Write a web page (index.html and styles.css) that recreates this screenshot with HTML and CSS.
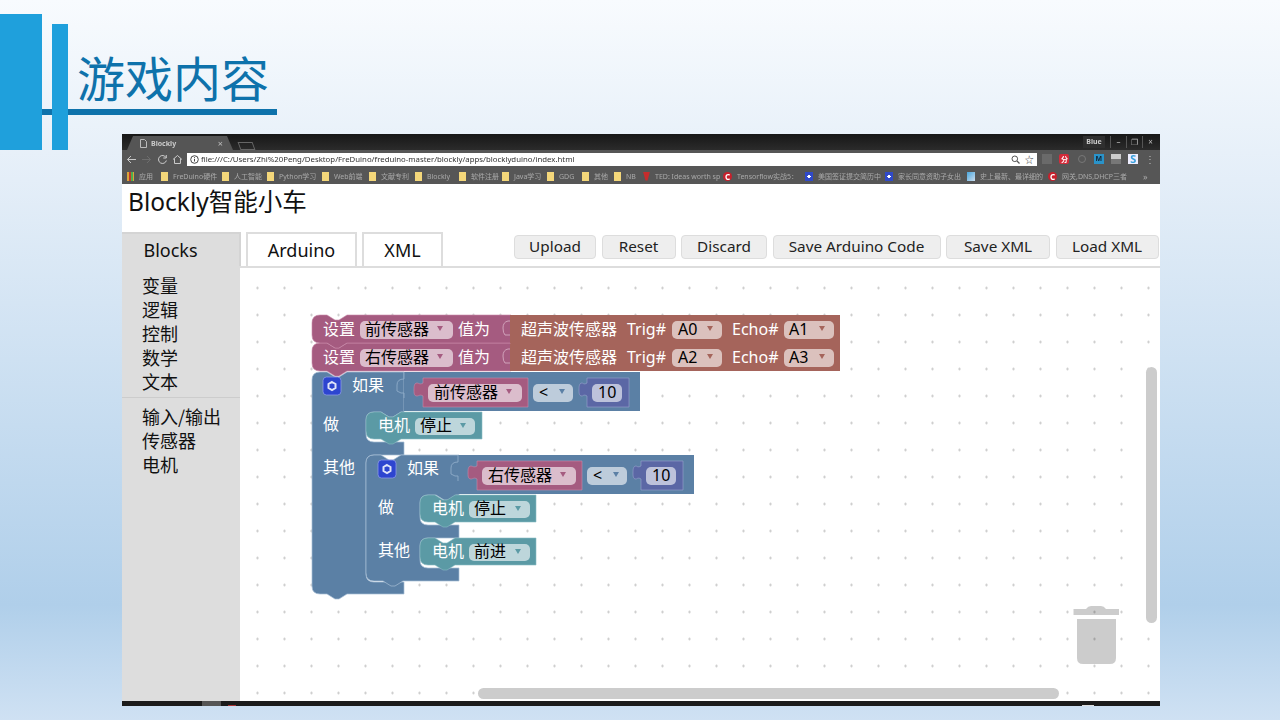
FILE: index.html
```html
<!DOCTYPE html>
<html lang="zh-CN">
<head>
  <meta charset="UTF-8" />
  <title>游戏内容</title>
  <link rel="stylesheet" href="styles.css">
</head>
<body>
  <header class="slide-head">
    <div class="bar-wide"></div>
    <div class="title-wrap"><h1>游戏内容</h1></div>
    <div class="bar-thin"></div>
  </header>

  <div class="window">
    <!-- browser chrome -->
    <div class="tabstrip">
      <div class="tab">
        <svg class="tab-doc" width="7" height="9" viewBox="0 0 7 9"><path d="M.5.5h4l2 2v6h-6z" fill="none" stroke="#bbb"/></svg>
        <span class="tab-title">Blockly</span>
        <span class="tab-close">×</span>
      </div>
      <div class="newtab"></div>
      <div class="win-controls">
        <span class="profile">Blue</span>
        <span class="win-btn">–</span>
        <span class="win-btn">❐</span>
        <span class="win-btn">×</span>
      </div>
    </div>

    <div class="toolbar">
      <div class="nav-icons">
        <svg width="15" height="13" viewBox="0 0 15 13"><path d="M12 6.500H3.500M7 3L3.500 6.500 7 10" fill="none" stroke="#ccc"/></svg>
        <svg width="15" height="13" viewBox="0 0 15 13"><path d="M3 6.500h8.500M8 3l3.500 3.500L8 10" fill="none" stroke="#6e6e6e"/></svg>
        <svg width="15" height="13" viewBox="0 0 15 13"><path d="M11 4.500a4 4 0 1 0 .4 3M11.300 2v3h-3" fill="none" stroke="#ccc"/></svg>
        <svg width="15" height="13" viewBox="0 0 15 13"><path d="M3 6.500L7.500 2.500 12 6.500M4.500 5.500V10.500H10.500V5.500" fill="none" stroke="#ccc"/></svg>
      </div>
      <div class="omnibox">
        <svg width="9" height="9" viewBox="0 0 9 9"><circle cx="4.500" cy="4.500" r="3.800" fill="none" stroke="#444"/><path d="M4.500 4v2.500M4.500 2.200v1" stroke="#444"/></svg>
        <span class="url">file:///C:/Users/Zhi%20Peng/Desktop/FreDuino/freduino-master/blockly/apps/blocklyduino/index.html</span>
        <svg width="9" height="9" viewBox="0 0 9 9"><circle cx="3.800" cy="3.800" r="2.800" fill="none" stroke="#555"/><path d="M6 6l2.500 2.500" stroke="#555" stroke-width="1.200"/></svg>
        <span class="star">☆</span>
      </div>
      <div class="ext-icons">
        <span class="ext"><i class="ext-pin"></i></span>
        <span class="ext"><i class="ext-red">分</i></span>
        <span class="ext"><i class="ext-ring"></i></span>
        <span class="ext"><i class="ext-m">M</i></span>
        <span class="ext"><i class="ext-pc"></i></span>
        <span class="ext"><i class="ext-s">S</i></span>
        <span class="ext ext-dots">⋮</span>
      </div>
    </div>

    <div class="bookmarks">
      <span class="bm"><i class="ic-apps"></i>应用</span>
      <span class="bm"><i class="ic-folder"></i>FreDuino硬件</span>
      <span class="bm"><i class="ic-folder"></i>人工智能</span>
      <span class="bm"><i class="ic-folder"></i>Python学习</span>
      <span class="bm"><i class="ic-folder"></i>Web前端</span>
      <span class="bm"><i class="ic-folder"></i>文献专利</span>
      <span class="bm"><i class="ic-folder"></i>Blockly</span>
      <span class="bm"><i class="ic-folder"></i>软件注册</span>
      <span class="bm"><i class="ic-folder"></i>Java学习</span>
      <span class="bm"><i class="ic-folder"></i>GDG</span>
      <span class="bm"><i class="ic-folder"></i>其他</span>
      <span class="bm"><i class="ic-folder"></i>NB</span>
      <span class="bm"><i class="ic-ted"></i>TED: Ideas worth sp</span>
      <span class="bm"><i class="ic-csdn">C</i>Tensorflow实战5：</span>
      <span class="bm"><i class="ic-paw"></i>美国签证提交简历中</span>
      <span class="bm"><i class="ic-paw"></i>家长同意资助子女出</span>
      <span class="bm"><i class="ic-s"></i>史上最新、最详细的</span>
      <span class="bm"><i class="ic-csdn">C</i>网关,DNS,DHCP三者</span>
      <span class="bm bm-more">»</span>
    </div>

    <!-- page -->
    <div class="page">
      <h2 class="page-title">Blockly智能小车</h2>

      <div class="tabs-row">
        <div class="page-tab page-tab-on">Blocks</div>
        <div class="page-tab page-tab-arduino">Arduino</div>
        <div class="page-tab page-tab-xml">XML</div>
        <div class="actions">
          <button class="btn">Upload</button>
          <button class="btn">Reset</button>
          <button class="btn">Discard</button>
          <button class="btn">Save Arduino Code</button>
          <button class="btn">Save XML</button>
          <button class="btn">Load XML</button>
        </div>
      </div>

      <div class="workspace">
        <ul class="toolbox">
          <li>变量</li>
          <li>逻辑</li>
          <li>控制</li>
          <li>数学</li>
          <li>文本</li>
          <li class="toolbox-sep"></li>
          <li>输入/输出</li>
          <li>传感器</li>
          <li>电机</li>
        </ul>

        <div class="canvas">
          <svg class="blocks" width="920" height="433" viewBox="240 268 920 433">
            <defs>
              <g id="gear">
                <rect x="323" y="377" width="18" height="18" rx="3.500" class="gear-box"/>
                <polygon points="332,382 335.500,384 335.500,388 332,390 328.500,388 328.500,384" class="gear-nut"/>
              </g>

              <path id="tab-set" d="M312 323Q312 315 320 315H327l8 5h4l8 -5H511V343H347l-8 5h-4l-8 -5H320Q312 343 312 335Z"/>
              <path id="tab-sonar" d="M510 315H840V343H510Z"/>
              <path id="tab-socket" d="M510 321H508Q503 322 503 328Q503 333 505 335H510"/>

              <g id="motor">
                <path class="b-motor" d="M366 420Q366 412 374 412H381l8 5h4l8 -5H482V439H401l-8 5h-4l-8 -5H374Q366 439 366 431Z"/>
                <text x="378" y="431" class="b-label">电机</text>
              </g>

              <g id="compare">
                <path class="b-fill" d="M404 372H640V411H404Z"/>
                <path class="logic-socket" d="M404 372V379Q397 379 397 385V391L401 393H404V398"/>
                <path class="b-var" d="M423 378H528V407H423V396c-3 -2 -4 0 -6 0c-3 0 -3 -3 -3 -6s0 -7 3 -7c2 0 3 2 6 0Z"/>
                <rect x="428" y="384" width="94" height="18" rx="5" class="pill"/>
                <polygon points="506,389 512,389 509,394" class="arrow-var"/>
                <rect x="533" y="384" width="40" height="18" rx="5" class="pill"/>
                <text x="539" y="398" class="b-field">&lt;</text>
                <polygon points="559,389 565,389 562,394" class="arrow-logic"/>
                <path class="b-num" d="M587 378H629V407H587V396c-3 -2 -4 0 -5 0c-3 0 -3 -3 -3 -6s0 -7 3 -7c1 0 2 2 5 0Z"/>
                <rect x="592" y="384" width="30" height="18" rx="5" class="pill"/>
                <text x="598" y="398" class="b-field">10</text>
              </g>
            </defs>

            <!-- outer if -->
            <path class="b-logic" d="M312 380Q312 372 320 372H327l8 5h4l8 -5H404V412H401l-8 5h-4l-8 -5H374Q366 412 366 420V434Q366 442 374 442H404V455H374Q366 455 366 463V574Q366 582 374 582H404V594H347l-8 5h-4l-8 -5H320Q312 594 312 586Z"/>
            <use href="#compare"/>
            <use href="#gear"/>
            <text x="352" y="391" class="b-label">如果</text>
            <text x="323" y="430" class="b-label">做</text>
            <text x="323" y="473" class="b-label">其他</text>
            <text x="434" y="398" class="b-field">前传感器</text>
            <use href="#motor"/>
            <rect x="415" y="418" width="60" height="17" rx="5" class="pill"/>
            <text x="420" y="431" class="b-field">停止</text>
            <polygon points="460,423 466,423 463,428" class="arrow-motor"/>

            <!-- nested if -->
            <path class="b-logic" d="M366 463Q366 455 374 455H381l8 5h4l8 -5H459V495H456l-8 5h-4l-8 -5H428Q420 495 420 503V517Q420 525 428 525H459V538H428Q420 538 420 546V560Q420 568 428 568H459V581H403l-8 5h-4l-8 -5H374Q366 581 366 573Z"/>
            <use href="#compare" transform="translate(54 83)"/>
            <use href="#gear" transform="translate(55 83)"/>
            <text x="407" y="474" class="b-label">如果</text>
            <text x="378" y="513" class="b-label">做</text>
            <text x="378" y="556" class="b-label">其他</text>
            <text x="488" y="481" class="b-field">右传感器</text>

            <use href="#motor" transform="translate(54 83)"/>
            <rect x="469" y="501" width="61" height="17" rx="5" class="pill"/>
            <text x="474" y="514" class="b-field">停止</text>
            <polygon points="515,506 521,506 518,511" class="arrow-motor"/>

            <use href="#motor" transform="translate(54 126)"/>
            <rect x="469" y="544" width="61" height="17" rx="5" class="pill"/>
            <text x="474" y="557" class="b-field">前进</text>
            <polygon points="515,549 521,549 518,554" class="arrow-motor"/>

            <!-- set blocks -->
            <use href="#tab-set" class="b-var" transform="translate(0 28)"/>
            <use href="#tab-sonar" class="b-sonar" transform="translate(0 28)"/>
            <use href="#tab-socket" class="set-socket" transform="translate(0 28)"/>
            <use href="#tab-set" class="b-var"/>
            <use href="#tab-sonar" class="b-sonar"/>
            <use href="#tab-socket" class="set-socket"/>

            <text x="323" y="335" class="b-label">设置</text>
            <rect x="360" y="321" width="93" height="18" rx="5" class="pill"/>
            <text x="365" y="335" class="b-field">前传感器</text>
            <polygon points="437,326 443,326 440,331" class="arrow-var"/>
            <text x="458" y="335" class="b-label">值为</text>
            <text x="521" y="335" class="b-label">超声波传感器</text>
            <text x="627" y="335" class="b-label">Trig#</text>
            <rect x="672" y="321" width="50" height="18" rx="5" class="pill"/>
            <text x="678" y="335" class="b-field">A0</text>
            <polygon points="707,326 713,326 710,331" class="arrow-sonar"/>
            <text x="732" y="335" class="b-label">Echo#</text>
            <rect x="784" y="321" width="50" height="18" rx="5" class="pill"/>
            <text x="789" y="335" class="b-field">A1</text>
            <polygon points="819,326 825,326 822,331" class="arrow-sonar"/>

            <text x="323" y="363" class="b-label">设置</text>
            <rect x="360" y="349" width="93" height="18" rx="5" class="pill"/>
            <text x="365" y="363" class="b-field">右传感器</text>
            <polygon points="437,354 443,354 440,359" class="arrow-var"/>
            <text x="458" y="363" class="b-label">值为</text>
            <text x="521" y="363" class="b-label">超声波传感器</text>
            <text x="627" y="363" class="b-label">Trig#</text>
            <rect x="672" y="349" width="50" height="18" rx="5" class="pill"/>
            <text x="678" y="363" class="b-field">A2</text>
            <polygon points="707,354 713,354 710,359" class="arrow-sonar"/>
            <text x="732" y="363" class="b-label">Echo#</text>
            <rect x="784" y="349" width="50" height="18" rx="5" class="pill"/>
            <text x="789" y="363" class="b-field">A3</text>
            <polygon points="819,354 825,354 822,359" class="arrow-sonar"/>

            <!-- trash and scrollbars -->
            <g class="trash">
              <path d="M1073.500 609H1086Q1088 606 1091 606H1101Q1104 606 1106 609H1119V615H1073.500Z"/>
              <path d="M1077 619H1116V658Q1116 664 1110 664H1083Q1077 664 1077 658Z"/>
            </g>
            <rect x="1146" y="367" width="11" height="256" rx="5.500" class="scroll"/>
            <rect x="478" y="688" width="581" height="11" rx="5.500" class="scroll"/>
          </svg>
        </div>
      </div>
    </div>

    <div class="taskbar">
      <span class="task-chip"></span>
      <span class="task-red"></span>
      <span class="task-light"></span>
    </div>
  </div>
</body>
</html>
```

FILE: styles.css
```css
* {
  box-sizing: border-box;
}

html, body {
  margin: 0;
  height: 720px;
  overflow: hidden;
}

body {
  width: 1280px;
  font-family: "Noto Sans", "Noto Sans CJK SC", sans-serif;
  background: linear-gradient(180deg, #f8fbfe 0%, #e4eef8 25%, #b0cfea 84%, #cfe1f3 100%);
}

/* slide heading */
.slide-head {
  position: relative;
  display: flex;
  align-items: flex-start;
  height: 134px;
}

.bar-wide {
  width: 42px;
  height: 136px;
  margin-top: 14px;
  background: #1fa0dc;
}

.bar-thin {
  position: absolute;
  left: 52px;
  top: 24px;
  width: 16px;
  height: 126px;
  background: #1fa0dc;
}

.title-wrap {
  width: 235px;
  height: 115px;
  display: flex;
  align-items: flex-end;
  padding: 0 0 3px 35px;
  border-bottom: 6px solid #0e72ab;
}

.title-wrap h1 {
  margin: 0;
  font: 400 48px/60px "Noto Sans CJK SC", sans-serif;
  color: #0e72ab;
}

/* browser window */
.window {
  display: flex;
  flex-direction: column;
  width: 1038px;
  height: 572px;
  margin-left: 122px;
  background: #fff;
}

.tabstrip {
  display: flex;
  align-items: flex-end;
  height: 16px;
  flex: none;
  padding-left: 5px;
  background: linear-gradient(#171717, #2b2b2b);
}

.tab {
  display: flex;
  align-items: center;
  width: 106px;
  height: 14px;
  padding: 0 10px 0 13px;
  background: #555;
  clip-path: polygon(0 100%, 6px 0, 100px 0, 100% 100%);
  filter: blur(.3px);
}

.tab-title {
  margin-left: 4px;
  font: 700 7px "Noto Sans", sans-serif;
  color: #ccc;
}

.tab-close {
  margin-left: auto;
  font-size: 9px;
  color: #bbb;
}

.newtab {
  width: 15px;
  height: 8px;
  margin: 0 0 0 6px;
  border: 1px solid #666;
  transform: skewX(20deg);
}

.win-controls {
  display: flex;
  align-items: center;
  height: 16px;
  margin-left: auto;
  padding-right: 2px;
  filter: blur(.3px);
}

.profile {
  width: 22px;
  margin-right: 5px;
  text-align: center;
  font: 700 7px/12px "Noto Sans", sans-serif;
  color: #ccc;
  background: #2f2f2f;
}

.win-btn {
  width: 16px;
  text-align: center;
  font-size: 8px;
  line-height: 12px;
  color: #bbb;
  border-left: 1px solid #555;
}

.toolbar {
  display: flex;
  align-items: center;
  height: 18px;
  flex: none;
  padding: 0 1px 0 2px;
  background: #565656;
}

.nav-icons {
  display: flex;
  gap: .4px;
  width: 61px;
  filter: blur(.3px);
}

.omnibox {
  display: flex;
  align-items: center;
  flex: 1;
  height: 13px;
  margin-left: 2px;
  padding: 0 3px 0 3px;
  background: #fff;
}

.url {
  margin: 0 auto 0 2px;
  font: 7.800px "Noto Sans", sans-serif;
  color: #333;
  white-space: nowrap;
  filter: blur(.25px);
}

.star {
  margin-left: 5px;
  font-size: 9px;
  line-height: 9px;
  color: #444;
}

.ext-icons {
  display: flex;
  margin-left: 2px;
  filter: blur(.35px);
}

.ext {
  display: flex;
  justify-content: center;
  align-items: center;
  width: 17.200px;
  height: 18px;
}

.ext i {
  display: block;
  width: 10px;
  height: 10px;
  font: 700 7px/10px "Noto Sans", sans-serif;
  text-align: center;
  color: #fff;
}

.ext .ext-pin {
  background: #6a6a6a;
}

.ext .ext-red {
  background: #d42b3a;
  border-radius: 2px;
  font-family: "Noto Sans CJK SC", sans-serif;
}

.ext .ext-ring {
  width: 8px;
  height: 8px;
  border: 1px solid #777;
  border-radius: 50%;
}

.ext .ext-m {
  color: #123;
  background: #2a93c9;
}

.ext .ext-pc {
  background: linear-gradient(#ccc 55%, #777 55%);
}

.ext .ext-s {
  font-size: 11px;
  color: #38a0dc;
  background: #eef;
}

.ext-dots {
  font-size: 10px;
  color: #bbb;
}

.bookmarks {
  display: grid;
  grid-template-columns: 34px 61px 45px 55px 47px 46px 44px 43px 45px 35px 32px 29px 80px 82px 80px 82px 81px 95px 12px;
  align-items: center;
  height: 16px;
  flex: none;
  padding-left: 5px;
  background: #565656;
}

.bm {
  display: flex;
  align-items: center;
  gap: 5px;
  overflow: hidden;
  font: 7px "Noto Sans", "Noto Sans CJK SC", sans-serif;
  color: #aaa;
  white-space: nowrap;
  filter: blur(.3px);
}

.bm i {
  flex: none;
  display: block;
  width: 7px;
  height: 9px;
}

.bm .ic-apps {
  background: repeating-linear-gradient(90deg, #d9a43a 0 2px, #c0392b 2px 4px, #4caf50 4px 6px);
}

.bm .ic-folder {
  background: #f4d77a;
}

.bm .ic-ted {
  background: #c62c2c;
  clip-path: polygon(0 0, 100% 0, 65% 100%, 35% 100%);
}

.bm .ic-csdn {
  width: 9px;
  height: 9px;
  font: 700 8px/9px "Noto Sans", sans-serif;
  text-align: center;
  color: #fff;
  background: #c8202c;
  border-radius: 50%;
}

.bm .ic-paw {
  width: 8px;
  background: radial-gradient(circle, #fff 25%, #2f49c8 30%);
}

.bm .ic-s {
  width: 8px;
  background: linear-gradient(135deg, #49a6dc, #cde);
}

.bm-more {
  font-size: 9px;
}

/* page inside the browser */
.page {
  display: flex;
  flex-direction: column;
  flex: 1;
  min-height: 0;
}

.page-title {
  height: 48px;
  flex: none;
  margin: 0;
  padding-left: 6px;
  font: 400 24.500px/35px "Noto Sans", "Noto Sans CJK SC", sans-serif;
  color: #111;
}

.tabs-row {
  display: flex;
  height: 36px;
  flex: none;
  border-bottom: 2px solid #ddd;
}

.page-tab {
  height: 34px;
  padding-top: 3px;
  text-align: center;
  font-size: 18px;
  line-height: 26px;
  color: #111;
  border: 2px solid #ddd;
  border-bottom: 0;
}

.page-tab-on {
  width: 119px;
  padding-right: 20px;
  background: #ddd;
  border-color: #d4d4d4;
  border-left: 0;
}

.page-tab-arduino {
  width: 111px;
  margin-left: 5px;
}

.page-tab-xml {
  width: 81px;
  margin-left: 5px;
}

.actions {
  display: grid;
  grid-template-columns: 82px 74px 86px 168px 104px 103px;
  column-gap: 5.500px;
  height: 22px;
  margin: 3px 0 0 71px;
}

.btn {
  padding: 0 0 2px;
  font: 15.300px "Noto Sans", sans-serif;
  color: #222;
  background: #eee;
  border: 1px solid #ddd;
  border-radius: 4px;
}

.workspace {
  display: flex;
  flex: 1;
  min-height: 0;
}

.toolbox {
  width: 118px;
  flex: none;
  margin: 0;
  padding: 5px 0 0 20px;
  list-style: none;
  font: 18px/24px "Noto Sans CJK SC", sans-serif;
  color: #111;
  background: #ddd;
}

.toolbox-sep {
  height: 1px;
  margin: 4px 0 6px -20px;
  background: #ccc;
}

.canvas {
  flex: 1;
  background-color: #fff;
  background-image: radial-gradient(circle at center, #c6c6c6 0, #c6c6c6 .8px, transparent 1.500px);
  background-size: 27px 27px;
  background-position: 4px 6.500px;
}

.blocks {
  display: block;
}

/* block colours */
.b-var {
  fill: #a55b80;
  stroke: #c98aa9;
  stroke-width: .6;
}

.b-sonar {
  fill: #a5645b;
}

.set-socket {
  fill: none;
  stroke: #d5a9c0;
  stroke-width: .9;
}

.b-logic {
  fill: #5b80a5;
  stroke: #a8bfd6;
  stroke-width: .7;
}

.b-fill {
  fill: #5b80a5;
}

.logic-socket {
  fill: none;
  stroke: #8fabc8;
  stroke-width: .9;
}

.b-num {
  fill: #5b67a5;
  stroke: #9aa3cf;
  stroke-width: .6;
}

.b-motor {
  fill: #5b9aa5;
  stroke: #8cbcc4;
  stroke-width: .6;
}

.b-label {
  font: 16px "Noto Sans", "Noto Sans CJK SC", sans-serif;
  fill: #fff;
}

.b-field {
  font: 16px "Noto Sans", "Noto Sans CJK SC", sans-serif;
  fill: #000;
}

.pill {
  fill: #fff;
  fill-opacity: .6;
}

.arrow-var {
  fill: #a55b80;
}

.arrow-sonar {
  fill: #a5645b;
}

.arrow-logic {
  fill: #5b80a5;
}

.arrow-motor {
  fill: #5b9aa5;
}

.gear-box {
  fill: #2d45d0;
  stroke: #8c9be6;
  stroke-width: .8;
}

.gear-nut {
  fill: #2d45d0;
  stroke: #dfe4fa;
  stroke-width: 2;
}

.trash path {
  fill: #000;
  fill-opacity: .2;
}

.scroll {
  fill: #ccc;
}

.taskbar {
  display: flex;
  align-items: flex-end;
  height: 5px;
  flex: none;
  background: #1b1b1b;
}

.task-chip {
  width: 19px;
  height: 5px;
  margin-left: 80px;
  background: #555;
}

.task-red {
  width: 8px;
  height: 1px;
  margin-left: 7px;
  background: #a33;
}

.task-light {
  width: 12px;
  height: 1px;
  margin-left: 846px;
  background: #ddd;
}
```
